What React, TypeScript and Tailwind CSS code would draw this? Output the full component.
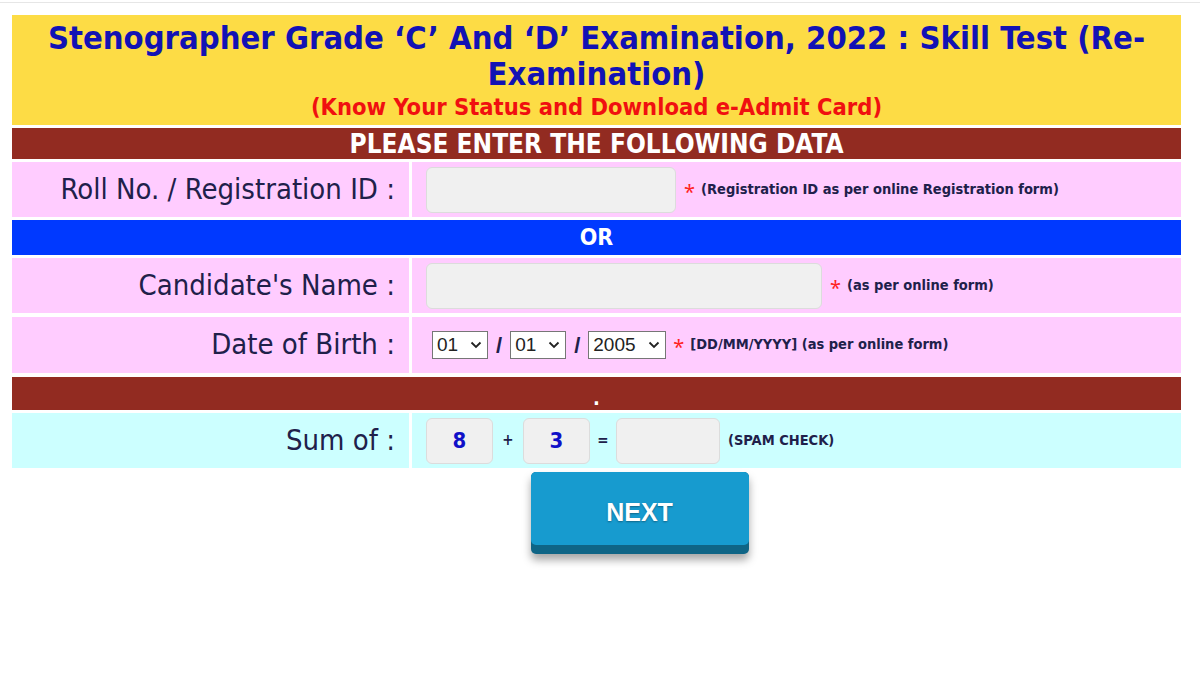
import React from "react";

const tahoma = "font-['Tahoma','DejaVu_Sans_Condensed','DejaVu_Sans',sans-serif]";

const Label = ({ children }: { children: React.ReactNode }) => (
    <div className={`w-[397px] shrink-0 flex items-center justify-end pr-[14px] text-[29px] text-[#20204a] ${tahoma}`}>
        {children}
    </div>
);

const Star = () => <span className="text-[#ff2222] text-[20px] mr-[6px] leading-none relative top-[2px]">*</span>;

const Note = ({ children }: { children: React.ReactNode }) => (
    <span className={`text-[14.5px] font-bold text-[#20204a] ${tahoma}`}>{children}</span>
);

const Box = ({ className, children }: { className: string; children?: React.ReactNode }) => (
    <div
        className={`bg-[#f0f0f0] border border-[#dcdcdc] rounded-[6px] flex items-center justify-center ${className}`}
    >
        {children}
    </div>
);

const Select = ({ value, w }: { value: string; w: string }) => (
    <div
        className={`${w} h-[28px] bg-white border border-[#767676] flex items-center justify-between pl-[4px] pr-[5px] font-['Liberation_Sans',Arial,sans-serif] text-[19px] text-[#222]`}
    >
        <span>{value}</span>
        <svg width="12" height="8" viewBox="0 0 12 8">
            <path d="M1.5 1.5 L6 6 L10.5 1.5" fill="none" stroke="#222" strokeWidth="1.8" />
        </svg>
    </div>
);

const Slash = () => (
    <span className="text-[#20204a] text-[22px] font-bold mx-[8px] font-['Liberation_Sans',sans-serif]">/</span>
);

export default function App() {
    return (
        <div className="w-[1200px] h-[675px] bg-white overflow-hidden">
            <div className="h-[3px] border-b border-[#e6e6e6]" />
            <div className="flex flex-col gap-[3px] ml-[12px] w-[1169px] mt-[12px]">
                <div className={`bg-[#fddc45] h-[110px] flex flex-col items-center pt-[5px] ${tahoma}`}>
                    <div className="text-[32.5px] font-bold text-[#1212b4] text-center leading-[36px] px-[20px]">
                        Stenographer Grade ‘C’ And ‘D’ Examination, 2022 : Skill Test (Re-
                        <br />
                        Examination)
                    </div>
                    <div className="text-[23.5px] font-bold text-[#f01010] leading-[30px]">
                        (Know Your Status and Download e-Admit Card)
                    </div>
                </div>
                <div
                    className={`bg-[#922b21] h-[31px] flex items-center justify-center text-white font-bold text-[26px] leading-none ${tahoma}`}
                >
                    PLEASE ENTER THE FOLLOWING DATA
                </div>
                <div className="flex gap-[3px] h-[55px]">
                    <div className="flex bg-[#ffccff]">
                        <Label>Roll No. / Registration ID :</Label>
                    </div>
                    <div className="flex-1 bg-[#ffccff] flex items-center pl-[14px]">
                        <Box className="w-[250px] h-[46px]" />
                        <span className="ml-[8px]" />
                        <Star />
                        <Note>(Registration ID as per online Registration form)</Note>
                    </div>
                </div>
                <div
                    className={`bg-[#0039ff] h-[35px] flex items-center justify-center text-white font-bold text-[23px] ${tahoma}`}
                >
                    OR
                </div>
                <div className="flex gap-[3px] h-[55px]">
                    <div className="flex bg-[#ffccff]">
                        <Label>Candidate&apos;s Name :</Label>
                    </div>
                    <div className="flex-1 bg-[#ffccff] flex items-center pl-[14px]">
                        <Box className="w-[396px] h-[46px]" />
                        <span className="ml-[8px]" />
                        <Star />
                        <Note>(as per online form)</Note>
                    </div>
                </div>
                <div className="flex gap-[3px] h-[56px] mt-[1px]">
                    <div className="flex bg-[#ffccff]">
                        <Label>Date of Birth :</Label>
                    </div>
                    <div className="flex-1 bg-[#ffccff] flex items-center pl-[20px]">
                        <Select value="01" w="w-[56px]" />
                        <Slash />
                        <Select value="01" w="w-[56px]" />
                        <Slash />
                        <Select value="2005" w="w-[78px]" />
                        <span className="ml-[7px]" />
                        <Star />
                        <Note>[DD/MM/YYYY] (as per online form)</Note>
                    </div>
                </div>
                <div
                    className={`bg-[#922b21] h-[33px] mt-[1px] flex items-end justify-center pb-[2px] text-white font-bold text-[20px] leading-none ${tahoma}`}
                >
                    .
                </div>
                <div className="flex gap-[3px] h-[55px]">
                    <div className="flex bg-[#ccffff]">
                        <Label>Sum of :</Label>
                    </div>
                    <div className={`flex-1 bg-[#ccffff] flex items-center pl-[14px] ${tahoma}`}>
                        <Box className="w-[67px] h-[46px] text-[22px] font-bold text-[#1010c8]">8</Box>
                        <span className="w-[30px] text-center text-[15px] font-bold text-[#20204a]">+</span>
                        <Box className="w-[67px] h-[46px] text-[22px] font-bold text-[#1010c8]">3</Box>
                        <span className="w-[26px] text-center text-[15px] font-bold text-[#20204a]">=</span>
                        <Box className="w-[104px] h-[46px]" />
                        <span className="ml-[8px]" />
                        <Note>(SPAM CHECK)</Note>
                    </div>
                </div>
            </div>
            <div className="flex justify-center pl-[79px] mt-[4px]">
                <button className="w-[218px] h-[82px] rounded-[5px] bg-[#0f6586] pb-[9px] shadow-[0_6px_8px_rgba(0,0,0,0.35)]">
                    <div className="h-full rounded-[5px] bg-[#179bcf] flex items-center justify-center pt-[8px] text-white font-bold text-[25px] font-['Liberation_Sans',Arial,sans-serif] [text-shadow:0_1px_2px_rgba(0,0,0,0.35)]">
                        NEXT
                    </div>
                </button>
            </div>
        </div>
    );
}
